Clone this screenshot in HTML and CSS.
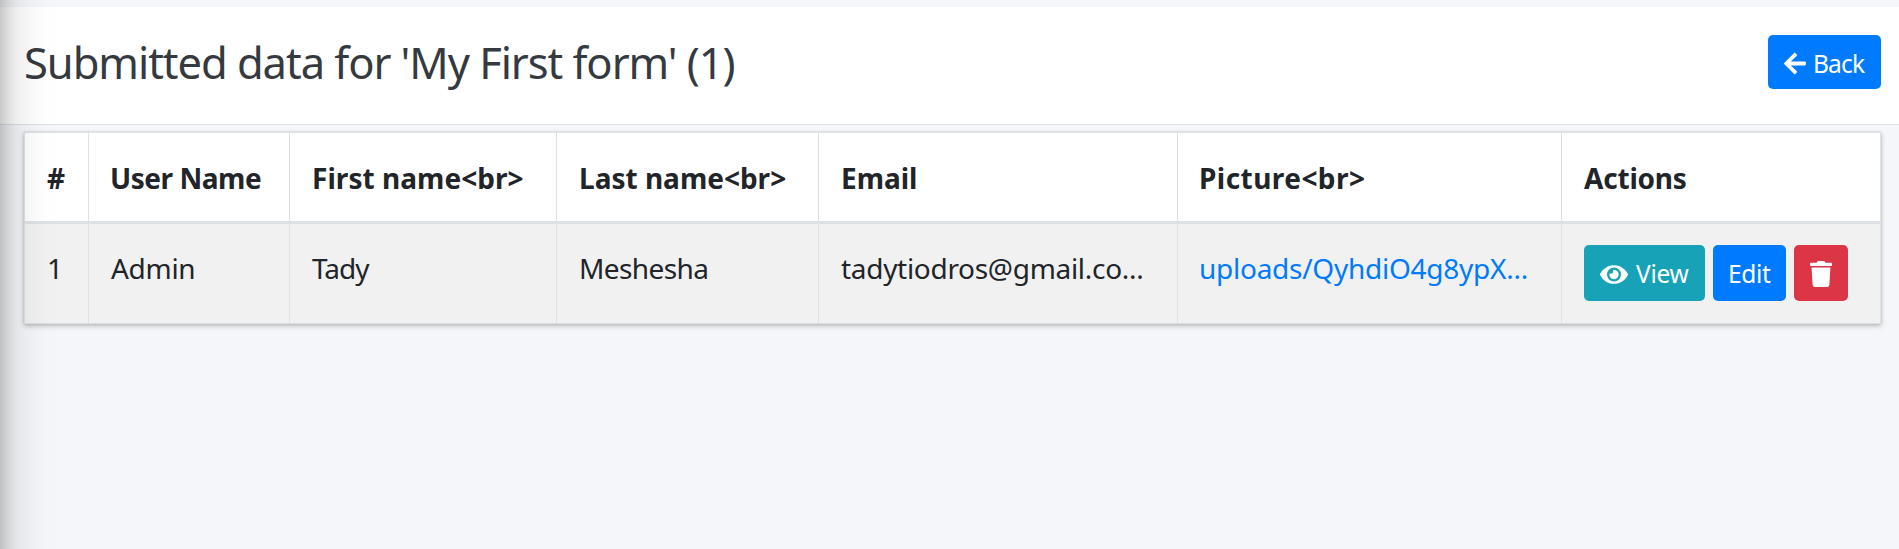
FILE: index.html
```html
<!DOCTYPE html>
<html lang="en">
<head>
<meta charset="utf-8">
<title>Submitted data</title>
<link rel="stylesheet" href="styles.css">
</head>
<body>
<header class="page-header">
  <h1 class="title">Submitted data for 'My First form' (1)</h1>
  <a class="btn btn-primary btn-back"><svg class="icon icon-arrow" viewBox="0 0 448 512"><path d="M257.5 445.1l-22.2 22.2c-9.4 9.4-24.6 9.4-33.9 0L7 273c-9.4-9.4-9.4-24.6 0-33.9L201.4 44.7c9.4-9.4 24.6-9.4 33.9 0l22.2 22.2c9.5 9.5 9.3 25-.4 34.3L136.6 216H424c13.3 0 24 10.7 24 24v32c0 13.3-10.7 24-24 24H136.6l120.5 114.8c9.8 9.3 10 24.8.4 34.3z"/></svg><span class="t-back">Back</span></a>
</header>
<main class="content">
  <table class="table">
    <colgroup><col class="c-num"><col class="c-user"><col class="c-first"><col class="c-last"><col class="c-email"><col class="c-picture"><col class="c-actions"></colgroup>
    <thead>
      <tr>
        <th>#</th>
        <th class="t-user">User Name</th>
        <th class="t-first">First name&lt;br&gt;</th>
        <th>Last name&lt;br&gt;</th>
        <th>Email</th>
        <th class="t-picture">Picture&lt;br&gt;</th>
        <th class="t-actions">Actions</th>
      </tr>
    </thead>
    <tbody>
      <tr>
        <td>1</td>
        <td class="t-admin">Admin</td>
        <td class="t-tady">Tady</td>
        <td class="t-meshesha">Meshesha</td>
        <td class="t-email">tadytiodros@gmail.co...</td>
        <td class="t-link"><a class="link">uploads/QyhdiO4g8ypX...</a></td>
        <td class="actions-cell">
          <div class="actions">
            <a class="btn btn-info"><svg class="icon icon-eye" viewBox="0 0 576 512"><path d="M572.52 241.4C518.29 135.59 410.93 64 288 64S57.68 135.64 3.48 241.41a32.35 32.35 0 0 0 0 29.19C57.71 376.41 165.07 448 288 448s230.32-71.64 284.52-177.41a32.35 32.35 0 0 0 0-29.19zM288 400a144 144 0 1 1 144-144 143.93 143.93 0 0 1-144 144zm0-240a95.31 95.31 0 0 0-25.31 3.79 47.85 47.85 0 0 1-66.9 66.9A95.78 95.78 0 1 0 288 160z"/></svg><span class="t-view">View</span></a>
            <a class="btn btn-primary btn-edit"><span class="t-view">Edit</span></a>
            <a class="btn btn-danger"><svg class="icon icon-trash" viewBox="0 0 448 512" preserveAspectRatio="none"><path d="M432 32H312l-9.4-18.7A24 24 0 0 0 281.1 0H166.8a23.72 23.72 0 0 0-21.4 13.3L136 32H16A16 16 0 0 0 0 48v32a16 16 0 0 0 16 16h416a16 16 0 0 0 16-16V48a16 16 0 0 0-16-16zM53.2 467a48 48 0 0 0 47.9 45h245.8a48 48 0 0 0 47.9-45L416 128H32z"/></svg></a>
          </div>
        </td>
      </tr>
    </tbody>
  </table>
</main>
<div class="edge-shadow"></div>
</body>
</html>
```
FILE: styles.css
```css
* { box-sizing: border-box; }
body {
  margin: 0;
  padding-top: 7px;
  height: 549px;
  overflow: hidden;
  background: #f4f6f9;
  color: #212529;
  font: 28px/42px "Noto Sans", "Open Sans", sans-serif;
}

.page-header {
  display: flex;
  justify-content: space-between;
  align-items: flex-start;
  height: 118px;
  padding: 28px 18px 0 24px;
  background: #fff;
  border-bottom: 1px solid #dee2e6;
}
.title {
  margin: 0;
  color: #343a40;
  font-size: 43.5px;
  font-weight: 400;
  line-height: 54px;
  letter-spacing: -1.05px;
}

.content { padding: 7px 18px 0 24px; }
.table {
  table-layout: fixed;
  width: 1857px;
  border-collapse: separate;
  border-spacing: 0;
  border: solid #dee2e6;
  border-width: 1px 1px 0 0;
  box-shadow: 0 0 2px rgba(0, 0, 0, .13), 0 2px 5px rgba(0, 0, 0, .24);
}
.c-num { width: 64px; }
.c-user { width: 201px; }
.c-first { width: 267px; }
.c-last { width: 262px; }
.c-email { width: 359px; }
.c-picture { width: 384px; }
.c-actions { width: 319px; }
th, td {
  padding: 24px 0 0 22px;
  text-align: left;
  vertical-align: top;
  white-space: nowrap;
  border-left: 1px solid #dee2e6;
}
th {
  height: 91px;
  background: #fff;
  font-weight: 700;
  border-bottom: 3px solid #dee2e6;
}
td {
  height: 100px;
  padding-top: 23px;
  background: #f1f1f1;
  border-bottom: 1px solid #dee2e6;
}
.actions-cell { padding-top: 21px; }
.actions { display: flex; gap: 8px; }
.link { color: #007bff; }

.btn {
  display: flex;
  align-items: center;
  height: 56px;
  padding: 0 16px;
  border-radius: 5px;
  color: #fff;
  font-size: 24.5px;
  line-height: 36px;
}
.btn span { padding-top: 2px; }
.btn-back { width: 113px; height: 54px; }
.btn .t-back { padding-top: 4px; }
.btn-primary { background: #007bff; }
.btn-info { width: 121px; background: #17a2b8; }
.btn-edit { width: 73px; padding-left: 15px; }
.btn-danger { width: 54px; background: #dc3545; }
.icon { flex: none; fill: currentColor; }
.icon-arrow { width: 22px; height: 25px; margin: 3px 7px 0 0; }
.icon-eye { width: 28px; height: 25px; margin: 2px 8px 0 0; }
.icon-trash { width: 22px; height: 26px; margin-top: 2px; }

.t-back { letter-spacing: -.8px; }
.t-view { letter-spacing: -.3px; }
.t-user { padding-left: 21px; letter-spacing: -.45px; }
.t-first { letter-spacing: .05px; }
.t-picture { padding-left: 21px; letter-spacing: .45px; }
.t-actions { letter-spacing: -.2px; }
.t-admin { letter-spacing: -.3px; }
.t-tady { letter-spacing: -1px; }
.t-meshesha { letter-spacing: -.6px; }
.t-email { letter-spacing: -.3px; }
.t-link { padding-left: 21px; letter-spacing: -.26px; }

/* Shadow cast by the sidebar, which sits off the left edge */
.edge-shadow {
  position: fixed;
  top: -100px;
  bottom: -100px;
  left: -200px;
  width: 200px;
  box-shadow: 0 0 49px rgba(0, 0, 0, .25), 0 0 18px rgba(0, 0, 0, .22);
}
```
